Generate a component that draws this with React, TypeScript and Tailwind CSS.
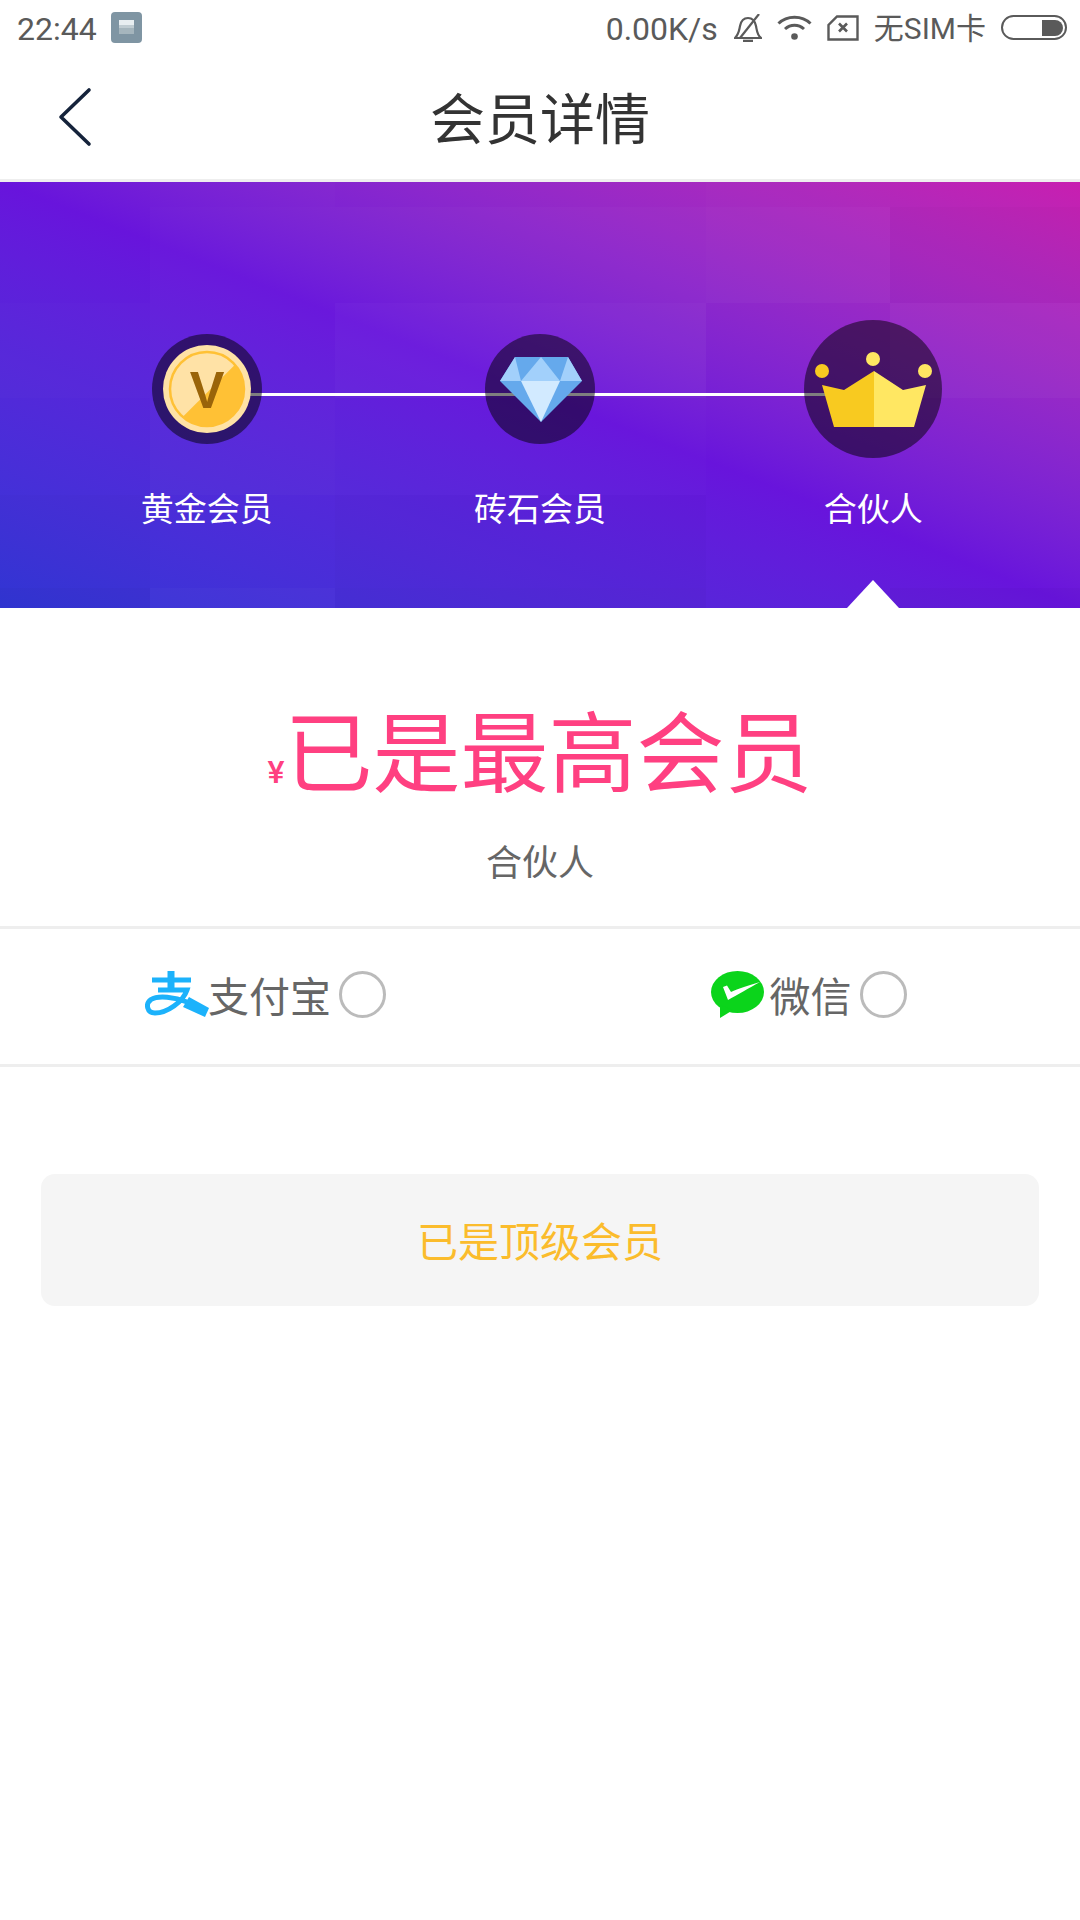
import React from 'react';

const cjk = '"Noto Sans CJK SC", sans-serif';

function StatusBar() {
  return (
    <div className="flex h-[55px] items-center justify-between pl-[17px] pr-[13px] pt-[2px] text-[32px] text-[#5a5a5a]" style={{ fontFamily: 'Roboto, ' + cjk }}>
      <div className="flex items-center gap-[14px]">
        <span className="leading-none">22:44</span>
        <svg className="-mt-[2px]" width="31" height="31" viewBox="0 0 31 31">
          <rect width="31" height="31" rx="4" fill="#7f95a3" />
          <rect x="8" y="8" width="15" height="5" fill="#e8eef1" />
          <rect x="8" y="13" width="15" height="3" fill="#c0ccd2" />
          <rect x="8" y="16" width="15" height="6" fill="#a5b5bd" />
        </svg>
      </div>
      <div className="flex items-center">
        <span className="leading-none">0.00K/s</span>
        <svg className="ml-[16px] -mt-[2px]" width="28" height="28" viewBox="0 0 28 28" fill="none" stroke="#5a5a5a" strokeWidth="2.2">
          <path d="M1 24 C5 20 5 17 6 12 C7 7 10 4 14 4 C18 4 21 7 22 12 C23 17 23 21 27 24 Z" />
          <path d="M9 27 H19" strokeWidth="2.6" />
          <path d="M25 0 L6 24" />
        </svg>
        <svg className="ml-[15px] -mt-[2px]" width="35" height="25" viewBox="0 0 35 25" fill="none">
          <path d="M1.5 8.5 C10 0 25 0 33.5 8.5" stroke="#5a5a5a" strokeWidth="3" />
          <path d="M8 14 C13.5 9 21.5 9 27 14" stroke="#5a5a5a" strokeWidth="3" />
          <circle cx="17.5" cy="21.5" r="3.3" fill="#5a5a5a" />
        </svg>
        <svg className="ml-[15px] -mt-[2px]" width="32" height="26" viewBox="0 0 32 26" fill="none" stroke="#5a5a5a" strokeWidth="2.4">
          <path d="M10 1.5 H30.5 V24.5 H1.5 V10 Z" />
          <path d="M12 8.5 L20 16.5 M20 8.5 L12 16.5" strokeWidth="2.6" />
        </svg>
        <span className="ml-[15px] text-[30px] leading-none">无SIM卡</span>
        <div className="ml-[15px] -mt-[2px] flex h-[25px] w-[66px] items-center justify-end rounded-full border-2 border-[#5a5a5a] pr-[2px]">
          <div className="h-[16px] w-[21px] rounded-r-full bg-[#5a5a5a]" />
        </div>
      </div>
    </div>
  );
}

function NavBar() {
  return (
    <div className="relative flex h-[127px] items-center justify-center border-b-[3px] border-[#eeeeee] pb-[3px]">
      <svg className="absolute left-[56px] top-[32px]" width="38" height="60" viewBox="0 0 38 60" fill="none">
        <path d="M33 3 L5 30 L33 57" stroke="#15233b" strokeWidth="3.6" strokeLinecap="round" strokeLinejoin="round" />
      </svg>
      <span className="text-[55px] leading-none text-[#333333]" style={{ fontFamily: cjk }}>会员详情</span>
    </div>
  );
}

function Coin() {
  return (
    <svg width="110" height="110" viewBox="0 0 110 110">
      <circle cx="55" cy="55" r="55" fill="#000000" fillOpacity="0.5" />
      <circle cx="55" cy="55" r="44" fill="#ffe2a6" />
      <circle cx="55" cy="55" r="37" fill="none" stroke="#ffc135" strokeWidth="2.5" />
      <path d="M83.2 30.4 A37.5 37.5 0 0 1 30.4 83.2 Z" fill="#ffc135" />
      <text x="55" y="74" textAnchor="middle" fontSize="52" fontWeight="bold" fontFamily='"Liberation Sans", sans-serif' fill="#9a6409">V</text>
    </svg>
  );
}

function Diamond() {
  return (
    <svg width="110" height="110" viewBox="0 0 110 110">
      <circle cx="55" cy="55" r="55" fill="#000000" fillOpacity="0.5" />
      <path d="M30 23 H83 L97 47 L56 88 L15 47 Z" fill="#65a9ec" />
      <path d="M30 23 L15 47 H36 Z M83 23 L97 47 H75 Z" fill="#a2d0fb" />
      <path d="M56 23 L36 47 H75 Z" fill="#a2d0fb" />
      <path d="M36 47 H75 L56 88 Z" fill="#d2eaff" />
    </svg>
  );
}

function Crown() {
  return (
    <svg width="138" height="138" viewBox="0 0 138 138">
      <circle cx="69" cy="69" r="69" fill="#000000" fillOpacity="0.5" />
      <circle cx="18" cy="51" r="7" fill="#f8ca20" />
      <circle cx="69" cy="39" r="7" fill="#ffe762" />
      <circle cx="121" cy="51" r="7" fill="#ffe762" />
      <path d="M18 65 L40 70 L70 51 V107 H30 Z" fill="#f8ca20" />
      <path d="M70 51 L99 70 L122 65 L110 107 H70 Z" fill="#ffe762" />
    </svg>
  );
}

function Level({ icon, label }: { icon: React.ReactNode; label: string }) {
  return (
    <div className="flex flex-col items-center">
      <div className="flex h-[138px] items-center justify-center">{icon}</div>
      <span className="mt-[29px] text-[33px] leading-[40px] text-white" style={{ fontFamily: cjk }}>{label}</span>
    </div>
  );
}

const tiles = [
  'col-start-2 row-start-1 bg-white/[0.01]',
  'col-start-4 row-start-1 bg-white/[0.01]',
  'col-start-2 row-start-2 bg-white/[0.02]',
  'col-start-3 row-start-2 bg-white/[0.02]',
  'col-start-4 row-start-2 bg-white/[0.03]',
  'col-start-5 row-start-2 bg-black/[0.01]',
  'col-start-1 row-start-3 bg-white/[0.01]',
  'col-start-2 row-start-3 bg-white/[0.02]',
  'col-start-3 row-start-3 bg-white/[0.04]',
  'col-start-5 row-start-3 bg-white/[0.03]',
  'col-start-2 row-start-4 bg-white/[0.02]',
  'col-start-3 row-start-4 bg-white/[0.01]',
  'col-start-1 row-start-5 bg-black/[0.01]',
  'col-start-3 row-start-5 bg-black/[0.01]',
  'col-start-1 row-start-6 bg-black/[0.03]',
  'col-start-2 row-start-6 bg-white/[0.02]',
  'col-start-3 row-start-6 bg-black/[0.02]',
  'col-start-5 row-start-6 bg-black/[0.02]',
];

function Banner() {
  return (
    <div className="relative h-[426px] overflow-hidden bg-gradient-to-tr from-[#3136d6] via-[#6814dc] to-[#c81eb0]">
      <div className="absolute inset-0 grid grid-cols-[150px_185px_371px_184px_1fr] grid-rows-[25px_96px_95px_97px_93px_1fr]">
        {tiles.map(t => (
          <div key={t} className={t} />
        ))}
      </div>
      <div className="absolute left-[207px] top-[211px] h-[3px] w-[666px] bg-white" />
      <div className="relative grid grid-cols-3 px-[40px] pt-[138px]">
        <Level icon={<Coin />} label="黄金会员" />
        <Level icon={<Diamond />} label="砖石会员" />
        <Level icon={<Crown />} label="合伙人" />
      </div>
      <div className="absolute bottom-0 left-[847px] h-0 w-0 border-x-[26px] border-b-[28px] border-x-transparent border-b-white" />
    </div>
  );
}

function Radio() {
  return <div className="h-[47px] w-[47px] rounded-full border-[3px] border-[#bbbbbb]" />;
}

function Alipay() {
  return (
    <svg width="64" height="46" viewBox="0 0 64 46" fill="none" stroke="#1cb2fb">
      <path d="M7 9 H46" strokeWidth="5" />
      <path d="M26 0 V20" strokeWidth="7" />
      <path d="M13 19 H42 C38 31 22 42 10 42 C2 42 0 33 6 28.5 C13 24 30 26 42 31" strokeWidth="5" />
      <path d="M44 26 L64 37 L60 46 L38 36 Z" fill="#1cb2fb" stroke="none" />
    </svg>
  );
}

function Wechat() {
  return (
    <svg width="53" height="47" viewBox="0 0 53 47">
      <ellipse cx="26.5" cy="21" rx="26.5" ry="21" fill="#0bd41b" />
      <path d="M9 34 L9 47 L22 39 Z" fill="#0bd41b" />
      <path d="M12 16 L17 29 C26 24 38 17 49 11 C38 14 27 18 20 21 L16 14.5 Z" fill="#ffffff" />
    </svg>
  );
}

export default function App() {
  return (
    <div className="h-[1920px] w-[1080px] overflow-hidden bg-white" style={{ fontFamily: cjk }}>
      <StatusBar />
      <NavBar />
      <Banner />
      <div className="flex flex-col items-center pt-[84px]">
        <div className="flex h-[110px] items-center">
          <span className="mt-[50px] text-[32px] font-medium leading-none text-[#ff4081]" style={{ fontFamily: 'Roboto, sans-serif' }}>¥</span>
          <span className="text-[88px] leading-none text-[#ff4081]">已是最高会员</span>
        </div>
        <span className="mt-[36px] text-[36px] leading-[44px] text-[#666666]">合伙人</span>
      </div>
      <div className="mt-[44px] flex h-[141px] border-y-[3px] border-[#eeeeee] pb-[5px]">
        <div className="flex flex-1 items-center pl-[145px]">
          <Alipay />
          <span className="-ml-[1px] mr-[8px] text-[41px] leading-none text-[#666666]">支付宝</span>
          <Radio />
        </div>
        <div className="flex flex-1 items-center pl-[172px]">
          <div className="ml-[12px]">
            <Wechat />
          </div>
          <span className="ml-[6px] mr-[8px] text-[41px] leading-none text-[#666666]">微信</span>
          <Radio />
        </div>
      </div>
      <div className="mx-[41px] mt-[107px] flex h-[132px] items-center justify-center rounded-[14px] bg-[#f5f5f5] pb-[2px]">
        <span className="text-[41px] leading-none text-[#fbbc2c]">已是顶级会员</span>
      </div>
    </div>
  );
}
